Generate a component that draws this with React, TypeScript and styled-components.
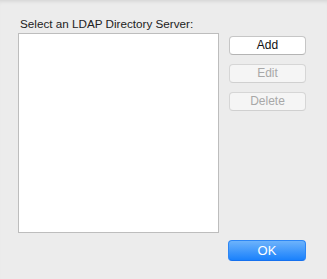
import React from "react";
import styled, { createGlobalStyle } from "styled-components";

const GlobalStyle = createGlobalStyle`
  html, body {
    margin: 0;
    padding: 0;
    background: #ececec;
  }
  * {
    box-sizing: border-box;
  }
`;

const Window = styled.div`
  width: 327px;
  height: 279px;
  background: #ececec;
  box-shadow: inset 0 4px 4px -3px rgba(0, 0, 0, 0.12);
  font-family: "Liberation Sans", Arial, sans-serif;
  font-size: 13px;
  color: #1a1a1a;
  padding: 16px 0 0 18px;
  display: flex;
  flex-direction: column;
`;

const Label = styled.div`
  font-size: 11.7px;
  line-height: 16px;
  height: 17px;
  padding-left: 2px;
  color: #222;
`;

const Body = styled.div`
  display: flex;
  gap: 10px;
`;

const ServerList = styled.div`
  width: 201px;
  height: 200px;
  background: #fff;
  border: 1px solid #bdbdbd;
`;

const Buttons = styled.div`
  display: flex;
  flex-direction: column;
  gap: 9px;
  padding-top: 3px;
`;

const PushButton = styled.button<{ disabled?: boolean }>`
  width: 77px;
  height: 19px;
  padding: 0;
  border-radius: 4px;
  border: 1px solid ${(p) => (p.disabled ? "#d6d6d6" : "#c6c6c6")};
  border-bottom-color: ${(p) => (p.disabled ? "#d0d0d0" : "#b4b4b4")};
  background: ${(p) => (p.disabled ? "#f5f5f5" : "#fff")};
  color: ${(p) => (p.disabled ? "#a8a8a8" : "#111")};
  font-family: inherit;
  font-size: 12px;
  line-height: 17px;
`;

const Footer = styled.div`
  margin-top: 7px;
  display: flex;
  padding-left: 210px;
`;

const DefaultButton = styled.button`
  width: 78px;
  height: 21px;
  padding: 0;
  border-radius: 4px;
  border: 1px solid #2c86f5;
  border-bottom-color: #1570ee;
  background: linear-gradient(to bottom, #6db3fb, #1a81fc);
  color: #fff;
  font-family: inherit;
  font-size: 13px;
  line-height: 19px;
`;

export default function App() {
  return (
    <>
      <GlobalStyle />
      <Window>
        <Label>Select an LDAP Directory Server:</Label>
        <Body>
          <ServerList />
          <Buttons>
            <PushButton>Add</PushButton>
            <PushButton disabled>Edit</PushButton>
            <PushButton disabled>Delete</PushButton>
          </Buttons>
        </Body>
        <Footer>
          <DefaultButton>OK</DefaultButton>
        </Footer>
      </Window>
    </>
  );
}
